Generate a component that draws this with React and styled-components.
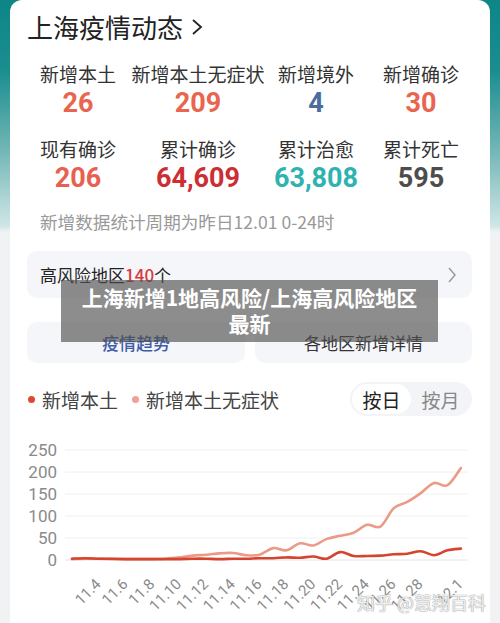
import React, { useState } from "react";
import styled, { createGlobalStyle } from "styled-components";

const GlobalStyle = createGlobalStyle`
  html, body {
    margin: 0;
    padding: 0;
    width: 500px;
    height: 623px;
    overflow: hidden;
    font-family: "Noto Sans CJK SC", "Noto Sans", sans-serif;
  }
  body {
    background: linear-gradient(
      180deg,
      #0d8688 0px,
      #1a8d8f 70px,
      #72b6b6 150px,
      #cfe6e6 226px,
      #f1f2f4 232px,
      #f1f2f4 100%
    );
  }
`;

const stats = [
  [
    { label: "新增本土", value: "26", color: "#e9654f" },
    { label: "新增本土无症状", value: "209", color: "#e9654f" },
    { label: "新增境外", value: "4", color: "#4a6d9e" },
    { label: "新增确诊", value: "30", color: "#e9654f" },
  ],
  [
    { label: "现有确诊", value: "206", color: "#e8604f" },
    { label: "累计确诊", value: "64,609", color: "#cc2f33" },
    { label: "累计治愈", value: "63,808", color: "#2fb3b1" },
    { label: "累计死亡", value: "595", color: "#4d4d4d" },
  ],
];

// 11.2 -> 12.1, one value per day
const localData = [
  3, 4, 3, 3, 2, 2, 2, 2, 2, 3, 3, 2, 3, 3, 4, 4, 6, 5, 8, 3, 18, 9, 9, 10,
  13, 14, 20, 11, 22, 26,
];
const silentData = [
  2, 3, 3, 2, 2, 2, 2, 3, 6, 10, 12, 15, 16, 11, 12, 27, 22, 38, 33, 48, 55,
  62, 80, 76, 118, 132, 152, 175, 170, 209,
];

const xLabels = [
  [2, "11.4"], [4, "11.6"], [6, "11.8"], [8, "11.10"], [10, "11.12"],
  [12, "11.14"], [14, "11.16"], [16, "11.18"], [18, "11.20"], [20, "11.22"],
  [22, "11.24"], [24, "11.26"], [26, "11.28"], [29, "12.1"],
];

// chart svg sits at page x 10, y 430
const px = (i) => 62 + i * 13.41;
const py = (v) => 132 - v * 0.44;

// catmull-rom to bezier for a soft line
function smoothPath(values) {
  const pts = values.map((v, i) => [px(i), py(v)]);
  let d = `M${pts[0][0]},${pts[0][1]}`;
  for (let i = 0; i < pts.length - 1; i++) {
    const p0 = pts[i - 1] || pts[i];
    const p1 = pts[i];
    const p2 = pts[i + 1];
    const p3 = pts[i + 2] || p2;
    const c1 = [p1[0] + (p2[0] - p0[0]) / 6, p1[1] + (p2[1] - p0[1]) / 6];
    const c2 = [p2[0] - (p3[0] - p1[0]) / 6, p2[1] - (p3[1] - p1[1]) / 6];
    d += ` C${c1[0].toFixed(1)},${c1[1].toFixed(1)} ${c2[0].toFixed(1)},${c2[1].toFixed(1)} ${p2[0].toFixed(1)},${p2[1].toFixed(1)}`;
  }
  return d;
}

const App = () => {
  const [mode, setMode] = useState("day");

  return (
    <>
      <GlobalStyle />
      <Card>
        <Title>
          上海疫情动态
          <svg width="12" height="18" viewBox="0 0 12 18">
            <polyline
              points="2,2 10,9 2,16"
              fill="none"
              stroke="#222"
              strokeWidth="1.8"
            />
          </svg>
        </Title>

        <StatsGrid>
          {stats.flat().map((s) => (
            <Stat key={s.label}>
              <StatLabel>{s.label}</StatLabel>
              <StatValue color={s.color}>{s.value}</StatValue>
            </Stat>
          ))}
        </StatsGrid>

        <Note>新增数据统计周期为昨日12.01 0-24时</Note>

        <RiskBox>
          <span>
            高风险地区<RiskCount>140</RiskCount>个
          </span>
          <svg width="10" height="18" viewBox="0 0 10 18">
            <polyline
              points="2,2 8,9 2,16"
              fill="none"
              stroke="#9a9a9a"
              strokeWidth="1.5"
            />
          </svg>
        </RiskBox>

        <ButtonRow>
          <ActionButton primary>疫情趋势</ActionButton>
          <ActionButton>各地区新增详情</ActionButton>
        </ButtonRow>

        <LegendRow>
          <Legend>
            <LegendItem>
              <Dot color="#e0492f" />
              新增本土
            </LegendItem>
            <LegendItem>
              <Dot color="#f1a093" />
              新增本土无症状
            </LegendItem>
          </Legend>
          <Toggle>
            <ToggleButton active={mode === "day"} onClick={() => setMode("day")}>
              按日
            </ToggleButton>
            <ToggleButton
              active={mode === "month"}
              onClick={() => setMode("month")}
            >
              按月
            </ToggleButton>
          </Toggle>
        </LegendRow>

        <Chart>
          <svg width="480" height="193" viewBox="0 0 480 193">
            {[250, 200, 150, 100, 50, 0].map((v) => (
              <g key={v}>
                <line
                  x1="55"
                  x2="458"
                  y1={py(v)}
                  y2={py(v)}
                  stroke={v === 0 ? "#e6e6e6" : "#f0f0f0"}
                  strokeWidth="1"
                />
                <text
                  x="47"
                  y={py(v) + 6}
                  textAnchor="end"
                  fontSize="17"
                  fill="#8a8a8a"
                  fontFamily="Roboto, sans-serif"
                >
                  {v}
                </text>
              </g>
            ))}
            <path
              d={smoothPath(silentData)}
              fill="none"
              stroke="#ec9a88"
              strokeWidth="2.6"
              strokeLinecap="round"
            />
            <path
              d={smoothPath(localData)}
              fill="none"
              stroke="#d5442e"
              strokeWidth="2.6"
              strokeLinecap="round"
            />
            {xLabels.map(([i, t]) => (
              <text
                key={t}
                x={px(i) + 3}
                y="157"
                textAnchor="end"
                fontSize="15"
                fill="#8a8a8a"
                fontFamily="Roboto, sans-serif"
                transform={`rotate(-45 ${px(i) + 3} 157)`}
              >
                {t}
              </text>
            ))}
          </svg>
        </Chart>

        <Overlay>
          上海新增1地高风险/上海高风险地区
          <br />
          最新
        </Overlay>
        <Watermark>知乎 @慧翔百科</Watermark>
      </Card>
    </>
  );
};

const Card = styled.div`
  position: relative;
  box-sizing: border-box;
  margin: 0 10px;
  height: 623px;
  padding: 10px 18px 0 17px;
  background: #ffffff;
  border-radius: 12px 12px 0 0;
`;

const Title = styled.h1`
  display: flex;
  align-items: center;
  gap: 8px;
  margin: 0;
  height: 34px;
  font-size: 26px;
  font-weight: 400;
  line-height: 34px;
  color: #222;
`;

const StatsGrid = styled.div`
  display: grid;
  grid-template-columns: 102px 138px 98px 112px;
  row-gap: 17px;
  margin-top: 18px;
`;

const Stat = styled.div`
  display: flex;
  flex-direction: column;
  align-items: center;
  white-space: nowrap;
`;

const StatLabel = styled.div`
  font-size: 19px;
  line-height: 24px;
  color: #333;
`;

const StatValue = styled.div`
  font-family: Roboto, "Noto Sans", sans-serif;
  font-size: 27px;
  font-weight: 700;
  line-height: 34px;
  color: ${(p) => p.color};
`;

const Note = styled.div`
  margin-top: 15px;
  padding-left: 13px;
  font-size: 17.6px;
  line-height: 24px;
  color: #999;
`;

const RiskBox = styled.div`
  display: flex;
  align-items: center;
  justify-content: space-between;
  box-sizing: border-box;
  height: 47px;
  margin-top: 17px;
  padding: 0 15px 0 13px;
  background: #f5f6f9;
  border-radius: 10px;
  font-size: 17px;
  color: #222;
`;

const RiskCount = styled.span`
  color: #d8393a;
  font-weight: 500;
`;

const ButtonRow = styled.div`
  display: grid;
  grid-template-columns: 218px 217px;
  gap: 10px;
  margin-top: 24px;
`;

const ActionButton = styled.div`
  display: flex;
  align-items: center;
  justify-content: center;
  height: 41px;
  background: #f5f6f9;
  border-radius: 10px;
  font-size: 17px;
  font-weight: ${(p) => (p.primary ? 500 : 400)};
  color: ${(p) => (p.primary ? "#3d5ca8" : "#333")};
`;

const LegendRow = styled.div`
  display: flex;
  align-items: center;
  justify-content: space-between;
  margin-top: 19px;
`;

const Legend = styled.div`
  display: flex;
  align-items: center;
  gap: 13px;
`;

const LegendItem = styled.div`
  display: flex;
  align-items: center;
  font-size: 19px;
  color: #444;
`;

const Dot = styled.span`
  width: 7px;
  height: 7px;
  margin: 0 7px 0 1px;
  border-radius: 50%;
  background: ${(p) => p.color};
`;

const Toggle = styled.div`
  display: flex;
  padding: 2px;
  background: #f3f4f7;
  border-radius: 17px;
`;

const ToggleButton = styled.div`
  display: flex;
  align-items: center;
  justify-content: center;
  width: 59px;
  height: 30px;
  border-radius: 15px;
  font-size: 19px;
  cursor: pointer;
  background: ${(p) => (p.active ? "#fff" : "transparent")};
  color: ${(p) => (p.active ? "#222" : "#888")};
`;

const Chart = styled.div`
  margin: 12px -18px 0 -17px;

  svg {
    display: block;
  }
`;

const Overlay = styled.div`
  position: absolute;
  left: 51px;
  top: 280px;
  width: 377px;
  height: 62px;
  padding-top: 4px;
  box-sizing: border-box;
  background: rgba(80, 80, 80, 0.65);
  color: #fff;
  font-size: 21px;
  font-weight: 700;
  line-height: 26px;
  text-align: center;
`;

const Watermark = styled.div`
  position: absolute;
  right: 4px;
  bottom: 8px;
  font-size: 18px;
  color: rgba(255, 255, 255, 0.85);
  text-shadow: 0 0 1px #999, 0 0 1px #999;
  white-space: nowrap;
`;

export default App;
